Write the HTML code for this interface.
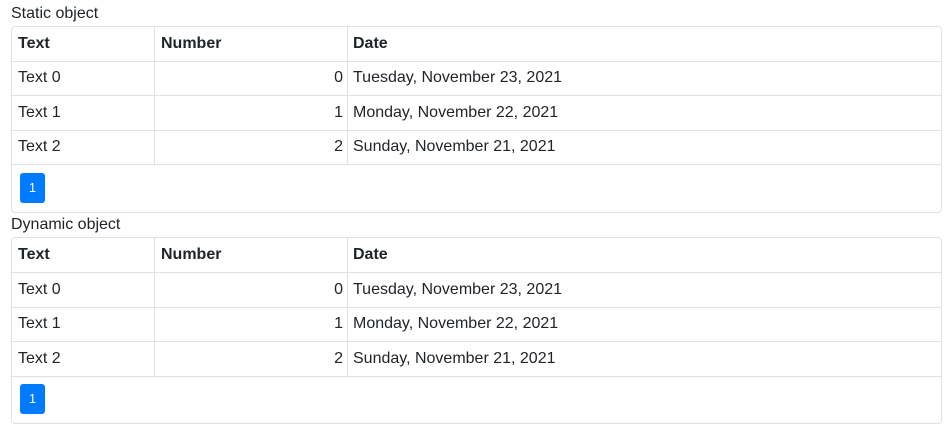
<!DOCTYPE html>
<html><head><style>
body{margin:0;width:950px;height:429px;background:#fff;font-family:"Liberation Sans",Arial,sans-serif;font-size:16px;color:#212529;position:relative;overflow:hidden}
.t{position:absolute;left:11px;font-size:16px;line-height:18px}
.box{position:absolute;left:11px;width:929px;height:185px;border:1px solid #dee2e6;border-radius:4px}
.row{position:absolute;left:0;width:929px;height:34px;border-bottom:1px solid #dee2e6}
.row div{position:absolute;top:0;line-height:34px;height:34px}
.c1{left:6px}
.c2{left:142px;width:187px;border-left:1px solid #dee2e6;padding-left:6px;height:34px}
.c2r{left:142px;width:188px;border-left:1px solid #dee2e6;text-align:right;height:34px}
.c3{left:335px;border-left:1px solid #dee2e6;padding-left:5px}
b{font-weight:bold}
.btn{position:absolute;left:8px;top:146px;width:25px;height:30px;background:#007bff;border-radius:3px;color:#fff;font-size:13px;text-align:center;line-height:30px}
</style></head><body>
<div class="t" style="top:5px">Static object</div>
<div class="box" style="top:26px">
<div class="row" style="top:0"><div class="c1"><b>Text</b></div><div class="c2"><b>Number</b></div><div class="c3"><b>Date</b></div></div>
<div class="row" style="top:34px;height:34px"><div class="c1">Text 0</div><div class="c2r">0</div><div class="c3">Tuesday, November 23, 2021</div></div>
<div class="row" style="top:69px"><div class="c1">Text 1</div><div class="c2r">1</div><div class="c3">Monday, November 22, 2021</div></div>
<div class="row" style="top:103px"><div class="c1">Text 2</div><div class="c2r">2</div><div class="c3">Sunday, November 21, 2021</div></div>
<div class="btn">1</div>
</div>
<div class="t" style="top:216px">Dynamic object</div>
<div class="box" style="top:237px">
<div class="row" style="top:0"><div class="c1"><b>Text</b></div><div class="c2"><b>Number</b></div><div class="c3"><b>Date</b></div></div>
<div class="row" style="top:35px"><div class="c1">Text 0</div><div class="c2r">0</div><div class="c3">Tuesday, November 23, 2021</div></div>
<div class="row" style="top:69px"><div class="c1">Text 1</div><div class="c2r">1</div><div class="c3">Monday, November 22, 2021</div></div>
<div class="row" style="top:104px"><div class="c1">Text 2</div><div class="c2r">2</div><div class="c3">Sunday, November 21, 2021</div></div>
<div class="btn">1</div>
</div>
</body></html>
